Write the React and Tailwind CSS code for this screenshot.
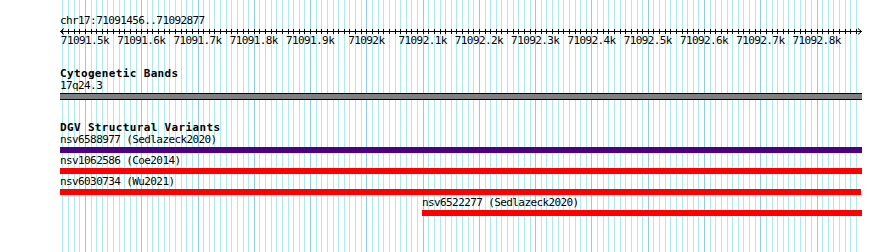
import React from 'react';

const START = 71091456;
const END = 71092877;
const LEFT = 60.2;
const SCALE = 0.5628;
const xOf = (bp) => LEFT + (bp - START) * SCALE;

const minors = [];
for (let bp = 71091460; bp <= END; bp += 10) minors.push(bp);
const majors = minors.filter((bp) => bp % 100 === 0);

const fmt = (bp) => {
  const k = bp / 1000;
  return (Number.isInteger(k) ? String(k) : k.toFixed(1)) + 'k';
};

const mono = { fontFamily: '"DejaVu Sans Mono", monospace' };

const GridLines = () => (
  <svg className="absolute inset-0" width="890" height="252">
    {minors.map((bp) => (
      <line
        key={bp}
        x1={Math.round(xOf(bp)) + 0.5}
        x2={Math.round(xOf(bp)) + 0.5}
        y1="0"
        y2="252"
        stroke={bp % 100 === 0 ? '#8ecbec' : '#ade9ef'}
        strokeWidth="1"
      />
    ))}
  </svg>
);

const Ruler = () => (
  <svg width="890" height="20" className="block">
    <line x1="60" x2="862" y1="4.5" y2="4.5" stroke="#000" />
    <polyline points="64,1.5 60.5,4.5 64,7.5" fill="none" stroke="#000" />
    <polyline points="858,1.5 861.5,4.5 858,7.5" fill="none" stroke="#000" />
    {minors.map((bp) => (
      <line
        key={bp}
        x1={Math.round(xOf(bp)) + 0.5}
        x2={Math.round(xOf(bp)) + 0.5}
        y1="2"
        y2="7"
        stroke="#000"
      />
    ))}
    {majors.map((bp) => (
      <text
        key={bp}
        x={xOf(bp)}
        y="17"
        textAnchor="middle"
        fontSize="11"
        letterSpacing="-0.6"
        fontFamily='"DejaVu Sans Mono", monospace'
        fill="#000"
      >
        {fmt(bp)}
      </text>
    ))}
  </svg>
);

const variants = [
  { name: 'nsv6588977 (Sedlazeck2020)', color: 'bg-[#4b0082]', from: 0, width: 802 },
  { name: 'nsv1062586 (Coe2014)', color: 'bg-[#ff0000]', from: 0, width: 802 },
  { name: 'nsv6030734 (Wu2021)', color: 'bg-[#ff0000]', from: 0, width: 801 },
  { name: 'nsv6522277 (Sedlazeck2020)', color: 'bg-[#ff0000]', from: 362, width: 440 },
];

export default function App() {
  return (
    <div className="relative w-[890px] h-[252px] bg-white overflow-hidden text-black" style={mono}>
      <GridLines />
      <div className="relative">
        <div className="pt-[15px] pl-[60px] h-[27px] text-[11px] leading-[12px] tracking-[-0.6px]">
          chr17:71091456..71092877
        </div>
        <Ruler />
        <div className="pl-[60px] w-[862px]">
          <div className="mt-[21px] h-[12px] text-[11px] leading-[12px] font-bold tracking-[0.35px]">
            Cytogenetic Bands
          </div>
          <div className="h-[12px] text-[11px] leading-[12px] tracking-[-0.6px]">17q24.3</div>
          <div className="mt-[1px] h-[7px] bg-[#808080] border-y border-black" />

          <div className="mt-[22px] h-[12px] text-[11px] leading-[12px] font-bold tracking-[0.35px]">
            DGV Structural Variants
          </div>
          <div className="flex flex-col">
            {variants.map((v) => (
              <div key={v.name} className="h-[21px]" style={{ paddingLeft: v.from }}>
                <div className="h-[12px] text-[11px] leading-[12px] tracking-[-0.6px] whitespace-nowrap">
                  {v.name}
                </div>
                <div className={`mt-[1px] h-[6px] ${v.color}`} style={{ width: v.width }} />
              </div>
            ))}
          </div>
        </div>
      </div>
    </div>
  );
}
